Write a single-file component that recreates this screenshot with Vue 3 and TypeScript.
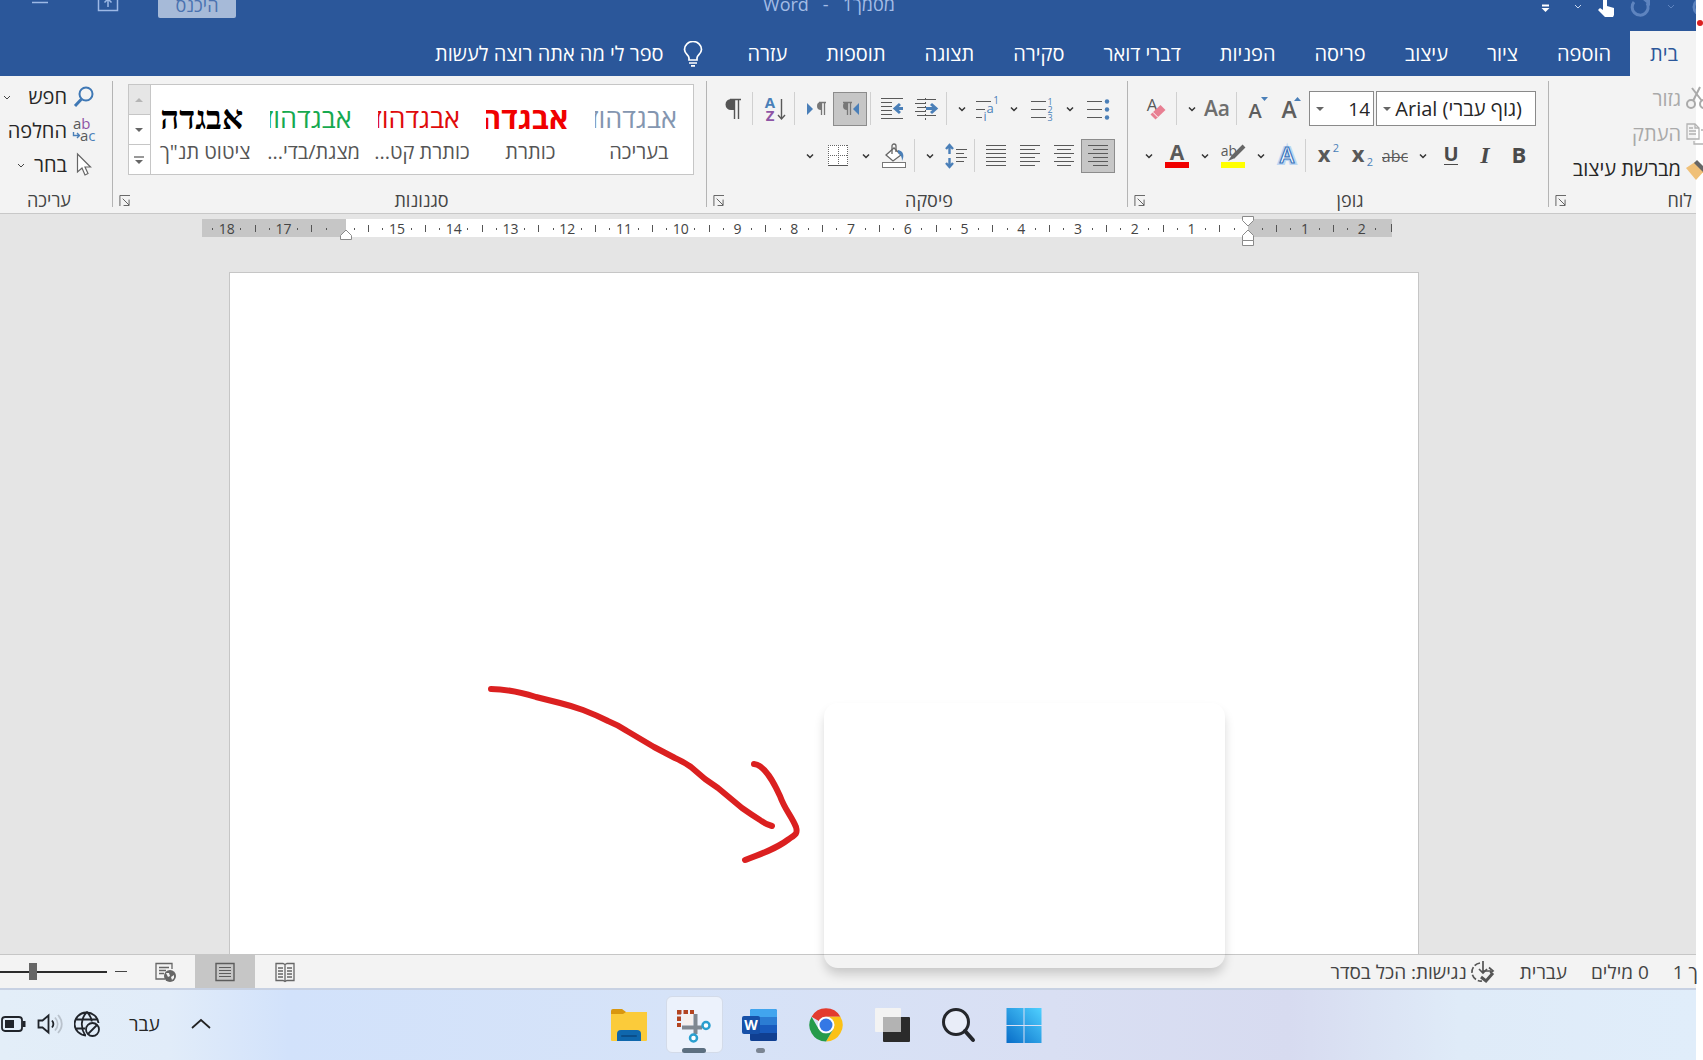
<script setup lang="ts">
import { ref } from 'vue'

interface Tool {
  kind: 'btn' | 'slim' | 'drop' | 'sep'
  icon?: string
  label?: string
  on?: boolean
}

const G = '#595959'
const B = '#4a7fb8'
const lines = (rows: [number, number, number][], color = G) =>
  rows.map(([a, b, y]) => `<path d="M${a} ${y}.5H${b}" stroke="${color}" stroke-width="1"/>`).join('')

const art: Record<string, string> = {
  chevron: `<path d="M9 10.5l3 3 3-3" fill="none" stroke="#333" stroke-width="1.5"/>`,
  bold: `<text x="12" y="19" font-size="22" font-weight="700" text-anchor="middle" fill="#4a4a4a">B</text>`,
  italic: `<text x="12" y="19" font-size="24" font-weight="700" font-style="italic" font-family="Liberation Serif, serif" text-anchor="middle" fill="#4a4a4a">I</text>`,
  underline: `<text x="12" y="17" font-size="20" font-weight="700" text-anchor="middle" fill="#4a4a4a">U</text><path d="M5 20.5h14" stroke="#4a4a4a"/>`,
  strike: `<text x="12" y="18" font-size="16" text-anchor="middle" fill="${G}">abc</text><path d="M-1 13.500h26" stroke="${G}"/>`,
  sub: `<text x="9" y="18" font-size="22" font-weight="700" text-anchor="middle" fill="${G}">x</text><text x="21" y="22" font-size="11" text-anchor="middle" fill="${B}">2</text>`,
  sup: `<text x="9" y="18" font-size="22" font-weight="700" text-anchor="middle" fill="${G}">x</text><text x="21" y="8" font-size="11" text-anchor="middle" fill="${B}">2</text>`,
  effect: `<text x="12" y="19" font-size="22" font-weight="700" text-anchor="middle" fill="#fff" stroke="#bcd6f2" stroke-width="4">A</text><text x="12" y="19" font-size="22" font-weight="600" text-anchor="middle" fill="#fff" stroke="#3f77bd" stroke-width="1.2">A</text>`,
  highlight: `<text x="8" y="12" font-size="14" text-anchor="middle" fill="${G}">ab</text><path d="M23 2L12 13" stroke="#666" stroke-width="4"/><path d="M11 11l3 3-7 3z" fill="#666"/><rect x="0" y="18" width="24" height="6" fill="#ff0"/>`,
  color: `<text x="12" y="16" font-size="21" font-weight="700" text-anchor="middle" fill="#5a5a5a">A</text><rect x="0" y="18" width="24" height="6" fill="#f00000"/>`,
  grow: `<text x="9" y="21" font-size="23" font-weight="600" text-anchor="middle" fill="#5e5e5e">A</text><path d="M14 4l3.500-4 3.500 4z" fill="${B}"/>`,
  shrink: `<text x="9" y="21" font-size="20" font-weight="600" text-anchor="middle" fill="#5e5e5e">A</text><path d="M15 0h7l-3.500 4z" fill="${B}"/>`,
  case: `<text x="11" y="19" font-size="21" font-weight="600" text-anchor="middle" fill="#6e6e6e">Aa</text>`,
  clear: `<text x="8" y="14" font-size="17" text-anchor="middle" fill="${G}">A</text><path d="M6.500 17.500l10-9.500 5 5-10 9.500z" fill="#e87f92"/><path d="M8.800 15.200l5 5" stroke="#fff" stroke-width="1"/>`,
  bullets: lines([[1, 16, 4], [1, 16, 12], [1, 16, 20]]) + [4, 12, 20].map((y) => `<circle cx="21" cy="${y + 0.5}" r="2.200" fill="${B}"/>`).join(''),
  numbers: lines([[1, 16, 4], [1, 16, 12], [1, 16, 20]]) + [1, 2, 3].map((n) => `<text x="20" y="${n * 8}" font-size="9" text-anchor="middle" fill="${B}">${n}</text>`).join(''),
  multi: lines([[0, 15, 4], [0, 9, 12], [0, 6, 20]]) + `<text x="20" y="7" font-size="10" text-anchor="middle" fill="${B}">1</text><text x="14" y="16" font-size="13" text-anchor="middle" fill="${B}">a</text><text x="9" y="24" font-size="12" text-anchor="middle" fill="${B}">i</text>`,
  indent: lines([[3, 22, 2], [1, 11, 6], [3, 11, 10], [1, 11, 14]]) + `<path d="M11.500 1v22" stroke="${G}" stroke-dasharray="2 2"/><path d="M3 18.500h19" stroke="${G}"/><path d="M12 11.500h9M17 7l5 4.500-5 4.500" fill="none" stroke="${B}" stroke-width="3"/>`,
  outdent: lines([[1, 23, 1], [1, 12, 5], [1, 12, 9], [1, 12, 13], [1, 12, 17], [1, 23, 21]]) + `<path d="M15 11.500h8M20 7l-5 4.500 5 4.500" fill="none" stroke="${B}" stroke-width="3"/>`,
  rtl: `<path d="M8 5.500h4M9.500 5v13M12.500 5v13M5 5.500h9" stroke="#777" stroke-width="1.300"/><path d="M9 5a4 4 0 0 0 0 8z" fill="#777"/><path d="M21 6v12l-6-6z" fill="${B}"/>`,
  ltr: `<path d="M3 6v12l6-6z" fill="${B}"/><path d="M15 5.500h7M17.500 5v13M20.500 5v13" stroke="#777" stroke-width="1.300"/><path d="M17 5a4 4 0 0 0 0 8z" fill="#777"/>`,
  sort: `<text x="8" y="11" font-size="15" font-weight="700" text-anchor="middle" fill="${B}">A</text><text x="8" y="24" font-size="15" font-weight="700" text-anchor="middle" fill="#8e55a5">Z</text><path d="M19.500 2v20M16 18l3.500 4 3.500-4" fill="none" stroke="${G}" stroke-width="1.400"/>`,
  pilcrow: `<path d="M10 2.500h11M14.500 2v20M18.500 2v20" stroke="#555" stroke-width="1.400"/><path d="M14 2H11a5.500 5.500 0 0 0 0 11h3z" fill="#555"/>`,
  center: lines([[2, 22, 1], [5, 19, 5], [2, 22, 9], [5, 19, 13], [2, 22, 17], [5, 19, 21]]),
  right: lines([[2, 22, 1], [7, 22, 5], [2, 22, 9], [7, 22, 13], [2, 22, 17], [7, 22, 21]]),
  left: lines([[2, 22, 1], [2, 17, 5], [2, 22, 9], [2, 17, 13], [2, 22, 17], [2, 17, 21]]),
  justify: lines([[2, 22, 1], [2, 22, 5], [2, 22, 9], [2, 22, 13], [2, 22, 17], [2, 22, 21]]),
  spacing: lines([[12, 23, 5], [12, 20, 9], [12, 23, 13], [12, 20, 17]]) + `<path d="M5.500 2v8M5.500 14v8M2 5l3.500-4L9 5M2 19l3.500 4L9 19" fill="none" stroke="${B}" stroke-width="2.400"/>`,
  bucket: `<rect x=".5" y="18.500" width="23" height="5" fill="#fff" stroke="#777"/><path d="M4 11l8-7 7 7-8 6z" fill="#fff" stroke="#666" stroke-width="1.300"/><path d="M10 10V2a2 2 0 0 1 4 0v6" fill="none" stroke="#666" stroke-width="1.300"/><path d="M16 6c5 1 7 5 4 11 0-4-1-6-4-8z" fill="${B}"/>`,
  borders: `<rect x="2" y="1" width="20" height="20" fill="#fff"/><path d="M2 1.500h20M2 11.500h20M2.500 1v20M12.500 1v20M21.500 1v20" stroke="#666" stroke-dasharray="1 1"/><path d="M2 21.500h20" stroke="#555"/>`,
}

const fontTop: Tool[] = [
  { kind: 'btn', icon: 'grow', label: 'הגדל גופן' },
  { kind: 'btn', icon: 'shrink', label: 'הקטן גופן' },
  { kind: 'sep' },
  { kind: 'slim', icon: 'case', label: 'שינוי רישיות' },
  { kind: 'drop' },
  { kind: 'sep' },
  { kind: 'btn', icon: 'clear', label: 'נקה עיצוב' },
]
const fontBottom: Tool[] = [
  { kind: 'btn', icon: 'bold', label: 'מודגש' },
  { kind: 'btn', icon: 'italic', label: 'נטוי' },
  { kind: 'btn', icon: 'underline', label: 'קו תחתון' },
  { kind: 'drop' },
  { kind: 'btn', icon: 'strike', label: 'קו חוצה' },
  { kind: 'btn', icon: 'sub', label: 'כתב תחתי' },
  { kind: 'btn', icon: 'sup', label: 'כתב עילי' },
  { kind: 'sep' },
  { kind: 'slim', icon: 'effect', label: 'אפקטי טקסט' },
  { kind: 'drop' },
  { kind: 'btn', icon: 'highlight', label: 'צבע סימון' },
  { kind: 'drop' },
  { kind: 'btn', icon: 'color', label: 'צבע גופן' },
  { kind: 'drop' },
]
const paraTop: Tool[] = [
  { kind: 'btn', icon: 'bullets', label: 'תבליטים' },
  { kind: 'drop' },
  { kind: 'btn', icon: 'numbers', label: 'מספור' },
  { kind: 'drop' },
  { kind: 'slim', icon: 'multi', label: 'רשימה מרובת רמות' },
  { kind: 'drop' },
  { kind: 'sep' },
  { kind: 'btn', icon: 'indent', label: 'הקטן כניסה' },
  { kind: 'btn', icon: 'outdent', label: 'הגדל כניסה' },
  { kind: 'sep' },
  { kind: 'btn', icon: 'rtl', label: 'מימין לשמאל', on: true },
  { kind: 'btn', icon: 'ltr', label: 'משמאל לימין' },
  { kind: 'sep' },
  { kind: 'btn', icon: 'sort', label: 'מיון' },
  { kind: 'sep' },
  { kind: 'btn', icon: 'pilcrow', label: 'הצג הכל' },
]
const paraBottom: Tool[] = [
  { kind: 'btn', icon: 'right', label: 'יישור לימין', on: true },
  { kind: 'btn', icon: 'center', label: 'מרכוז' },
  { kind: 'btn', icon: 'left', label: 'יישור לשמאל' },
  { kind: 'btn', icon: 'justify', label: 'יישור לשני הצדדים' },
  { kind: 'sep' },
  { kind: 'slim', icon: 'spacing', label: 'מרווח בין שורות' },
  { kind: 'drop' },
  { kind: 'sep' },
  { kind: 'btn', icon: 'bucket', label: 'הצללה' },
  { kind: 'drop' },
  { kind: 'btn', icon: 'borders', label: 'גבולות' },
  { kind: 'drop' },
]

const tabs = ['בית', 'הוספה', 'ציור', 'עיצוב', 'פריסה', 'הפניות', 'דברי דואר', 'סקירה', 'תצוגה', 'תוספות', 'עזרה']
const active = ref('בית')

const styleCards = [
  { sample: 'אבגדהוז', name: 'בעריכה', look: 'slate' },
  { sample: 'אבגדה', name: 'כותרת', look: 'heading' },
  { sample: 'אבגדהוז', name: 'כותרת קט...', look: 'red' },
  { sample: 'אבגדהוז', name: 'מצגת/בדי...', look: 'green' },
  { sample: 'אבגדה', name: 'ציטוט תנ"ך', look: 'quote' },
]

// Quarter-centimetre marks, from 2.25 cm right of the origin to 18.25 cm left of it.
const marks = Array.from({ length: 83 }, (_, i) => {
  const q = 9 - i
  const cm = Math.abs(q) / 4
  if (q === 0 || cm === 16) return ''
  if (q % 4 === 0) return String(cm)
  return q % 2 === 0 ? 'half' : 'dot'
})

const zoomLevel = ref(29)
</script>

<template>
  <div class="shell" dir="rtl">
    <main class="window">
      <header class="titlebar">
        <div class="quick">
          <button class="bare" aria-label="בצע שוב"><svg class="ic" viewBox="0 0 24 24"><circle cx="12" cy="9" r="8" fill="none" stroke="#5e84bf" stroke-width="3" /></svg></button>
          <button class="bare" aria-label="אפשרויות"><svg class="ic" viewBox="0 0 24 24"><path d="M9 7l3 3 3-3" fill="none" stroke="#5e84bf" /></svg></button>
          <button class="bare" aria-label="בטל"><svg class="ic" viewBox="0 0 24 24"><path d="M6 4a8 8 0 1 0 13 1" fill="none" stroke="#5e84bf" stroke-width="3" /><path d="M14 1h8v7z" fill="#5e84bf" /></svg></button>
          <button class="bare" aria-label="מצב מגע"><svg class="ic" viewBox="0 0 24 24"><path d="M6 0h4v8l7 2v7l-1 2H8L1 12l2-2 3 2z" fill="#fff" /></svg></button>
          <button class="bare" aria-label="בחירת מצב"><svg class="ic" viewBox="0 0 24 24"><path d="M9 7l3 3 3-3" fill="none" stroke="#c9d7ee" /></svg></button>
          <button class="bare" aria-label="התאמה אישית"><svg class="ic" viewBox="0 0 24 24"><path d="M7 7.500h7" stroke="#fff" stroke-width="2" /><path d="M6.500 10h8l-4 4z" fill="#fff" /></svg></button>
        </div>
        <h1 class="doc-title"><span>מסמך1</span><span>-</span><span>Word</span></h1>
        <div class="win-controls">
          <button class="signin">היכנס</button>
          <button class="bare" aria-label="אפשרויות תצוגה"><svg class="ic" viewBox="0 0 24 24"><path d="M2.500 0v15.500h19V0" fill="none" stroke="#9db9e6" stroke-width="1.500" /><path d="M12 12V4M8.500 7.500L12 4l3.500 3.500" fill="none" stroke="#9db9e6" stroke-width="1.500" /></svg></button>
          <button class="bare minimize" aria-label="מזער"><svg class="ic" viewBox="0 0 24 24"><path d="M4 7.500h16" stroke="#9db9e6" stroke-width="1.500" /></svg></button>
        </div>
      </header>

      <nav class="tabs">
        <button v-for="t in tabs" :key="t" class="tab" :class="{ current: t === active }" @click="active = t">{{ t }}</button>
        <button class="tell">
          <svg class="bulb" viewBox="0 0 20 26"><path d="M6 19v-2c0-3-4.500-4-4.500-8.500a8.500 8 0 0 1 17 0C18.500 13 14 14 14 17v2z" fill="none" stroke="#fff" stroke-width="1.700" /><path d="M6 22h8M8 24.800h4" stroke="#fff" stroke-width="1.700" /></svg>
          <span>ספר לי מה אתה רוצה לעשות</span>
        </button>
      </nav>

      <section class="ribbon">
        <div class="group clipboard">
          <div class="stack">
            <button class="cmd off"><svg class="ic" viewBox="0 0 24 24"><g fill="none" stroke="#aaa" stroke-width="2"><circle cx="5" cy="17" r="4" /><circle cx="18" cy="17" r="4" /><path d="M7 14L14 0M16 14L6 1" /></g></svg>גזור</button>
            <button class="cmd off"><svg class="ic" viewBox="0 0 24 24"><g fill="none" stroke="#b3b3b3" stroke-width="1.300"><path d="M1 2h8l4 4v11H1z" /><path d="M3 6h4M3 9h7M3 12h7M9 2v4h4M15 8h7v14H8v-3" /></g></svg>העתק</button>
            <button class="cmd"><svg class="ic" viewBox="0 0 24 24"><path d="M0 11l9-6 9 9-8 9z" fill="#f0c078" /><path d="M8 6l3-3 9 9-3 3z" fill="#666" /></svg>מברשת עיצוב</button>
          </div>
          <footer class="foot"><span class="caption">לוח</span><button class="launch" aria-label="לוח: אפשרויות"><svg viewBox="0 0 12 12"><path d="M1 12V.500h11M4 4l7 7M11 5v6.500H5" /></svg></button></footer>
        </div>
        <i class="rule"></i>

        <div class="group medium">
          <div class="rows">
            <div class="row">
              <span class="combo font"><select aria-label="גופן"><option>(גוף עברי) Arial</option></select><svg viewBox="0 0 8 4"><path d="M0 0h8L4 4z" /></svg></span>
              <span class="combo size"><select aria-label="גודל גופן"><option>14</option></select><svg viewBox="0 0 8 4"><path d="M0 0h8L4 4z" /></svg></span>
              <template v-for="(t, i) in fontTop" :key="i">
                <i v-if="t.kind === 'sep'" class="sep"></i>
                <button v-else class="tool" :class="[t.kind, { on: t.on }]" :aria-label="t.label || 'אפשרויות'"><svg class="ic" viewBox="0 0 24 24" v-html="art[t.icon || 'chevron']"></svg></button>
              </template>
            </div>
            <div class="row">
              <template v-for="(t, i) in fontBottom" :key="i">
                <i v-if="t.kind === 'sep'" class="sep"></i>
                <button v-else class="tool" :class="[t.kind, { on: t.on }]" :aria-label="t.label || 'אפשרויות'"><svg class="ic" viewBox="0 0 24 24" v-html="art[t.icon || 'chevron']"></svg></button>
              </template>
            </div>
          </div>
          <footer class="foot"><span class="caption">גופן</span><button class="launch" aria-label="גופן: אפשרויות"><svg viewBox="0 0 12 12"><path d="M1 12V.500h11M4 4l7 7M11 5v6.500H5" /></svg></button></footer>
        </div>
        <i class="rule"></i>

        <div class="group medium">
          <div class="rows">
            <div v-for="(list, r) in [paraTop, paraBottom]" :key="r" class="row">
              <template v-for="(t, i) in list" :key="i">
                <i v-if="t.kind === 'sep'" class="sep"></i>
                <button v-else class="tool" :class="[t.kind, { on: t.on }]" :aria-label="t.label || 'אפשרויות'"><svg class="ic" viewBox="0 0 24 24" v-html="art[t.icon || 'chevron']"></svg></button>
              </template>
            </div>
          </div>
          <footer class="foot"><span class="caption">פיסקה</span><button class="launch" aria-label="פיסקה: אפשרויות"><svg viewBox="0 0 12 12"><path d="M1 12V.500h11M4 4l7 7M11 5v6.500H5" /></svg></button></footer>
        </div>
        <i class="rule"></i>

        <div class="group styles">
          <div class="gallery">
            <button v-for="s in styleCards" :key="s.name" class="card">
              <span class="sample" :class="s.look">{{ s.sample }}</span>
              <span class="card-name">{{ s.name }}</span>
            </button>
            <div class="scroll">
              <button class="dim" aria-label="למעלה"><svg viewBox="0 0 8 4"><path d="M0 4h8L4 0z" fill="#b5b5b5" /></svg></button>
              <button aria-label="למטה"><svg viewBox="0 0 8 4"><path d="M0 0h8L4 4z" fill="#666" /></svg></button>
              <button aria-label="עוד"><svg class="more" viewBox="0 0 10 8"><path d="M0 1h10" stroke="#777" stroke-width="1.500" /><path d="M1 4h8L5 8z" fill="#666" /></svg></button>
            </div>
          </div>
          <footer class="foot"><span class="caption">סגנונות</span><button class="launch" aria-label="סגנונות: אפשרויות"><svg viewBox="0 0 12 12"><path d="M1 12V.500h11M4 4l7 7M11 5v6.500H5" /></svg></button></footer>
        </div>
        <i class="rule"></i>

        <div class="group editing">
          <div class="stack">
            <button class="cmd"><svg class="ic" viewBox="0 0 24 24"><circle cx="14" cy="9" r="6.500" fill="none" stroke="#3f78b5" stroke-width="2" /><path d="M9.500 14L3 21" stroke="#3f78b5" stroke-width="3" /></svg>חפש<svg class="chev far" viewBox="0 0 8 5"><path d="M1 1l3 3 3-3" /></svg></button>
            <button class="cmd"><svg class="ic" viewBox="0 0 24 24"><text x="1" y="10" font-size="15" fill="#595959">a<tspan fill="#8e55a5">b</tspan></text><text x="8" y="22" font-size="15" fill="#595959">a<tspan fill="#4a7fb8">c</tspan></text><path d="M1.500 13v3.500H7M5 14l2.500 2.500L5 19" fill="none" stroke="#4a7fb8" stroke-width="1.400" /></svg>החלפה</button>
            <button class="cmd"><svg class="ic" viewBox="0 0 24 24"><path d="M5.500 1v18l4.500-4 3 7 3-1.500-3-6.500h5.500z" fill="#fff" stroke="#666" stroke-width="1.200" /></svg>בחר<svg class="chev" viewBox="0 0 8 5"><path d="M1 1l3 3 3-3" /></svg></button>
          </div>
          <footer class="foot"><span class="caption">עריכה</span></footer>
        </div>
      </section>

      <section class="workspace">
        <div class="ruler">
          <span v-for="(m, i) in marks" :key="i" class="mark"><i v-if="m === 'half' || m === 'dot'" :class="m"></i><template v-else>{{ m }}</template></span>
          <svg class="stop start" viewBox="0 0 12 32"><g fill="#fff" stroke="#8a8a8a"><path d="M.500 1.500h11v4L6 11 .500 5.500z" /><path d="M.500 25.500v-5L6 15l5.500 5.500v5z" /><path d="M.500 25.500h11v5H.500z" /></g></svg>
          <svg class="stop end" viewBox="0 0 12 32"><path d="M.500 24.500v-4L6 15l5.500 5.500v4z" fill="#fff" stroke="#8a8a8a" /></svg>
        </div>
        <article class="paper" contenteditable="true" aria-label="מסמך"></article>
      </section>

      <footer class="status">
        <button class="st page-no">ך 1</button>
        <button class="st">0 מילים</button>
        <button class="st">עברית</button>
        <button class="st access"><svg class="ic" viewBox="0 0 24 24"><g fill="none" stroke="#555" stroke-width="1.700"><path d="M8 3a9 9 0 0 0 2 18" stroke-dasharray="6 2" /><path d="M11 1v11M7 9l4 4 4-4" /><path d="M11 11h8M17 7.500l4 3.500-3 2" /><path d="M9 17l5 4 7-8" stroke-width="3" /></g></svg>נגישות: הכל בסדר</button>
        <span class="grow"></span>
        <button class="view" aria-label="מצב קריאה"><svg class="ic" viewBox="0 0 24 24"><g fill="none" stroke="#666" stroke-width="1.300"><path d="M3 3.500h7l2 1 2-1h7v17h-7l-2 1-2-1H3zM12 4v18" /><path d="M5 8h5M5 11h5M5 14h5M5 17h5M14 8h5M14 11h5M14 14h5M14 17h5" /></g></svg></button>
        <button class="view on" aria-label="פריסת הדפסה"><svg class="ic" viewBox="0 0 24 24"><g fill="none" stroke="#5c5c5c"><path d="M3 3.500h18v17H3z" stroke-width="1.400" /><path d="M6 7.500h12M6 10.500h12M6 13.500h12M6 16.500h12" /></g></svg></button>
        <button class="view" aria-label="פריסת אינטרנט"><svg class="ic" viewBox="0 0 24 24"><g fill="none" stroke="#666" stroke-width="1.300"><path d="M12 19H3V3.500h16V9" /><path d="M6 7.500h10M6 10.500h7M6 13.500h5" /></g><circle cx="17" cy="16" r="6" fill="#666" /><path d="M13 13l3 0 1 3-2 1zM18 17l3-2v3l-2 2z" fill="#f3f3f3" /></svg></button>
        <button class="minus" aria-label="הקטן תצוגה"></button>
        <input v-model="zoomLevel" class="zoom" type="range" min="0" max="100" dir="ltr" aria-label="מרחק מתצוגה" />
      </footer>
    </main>

    <footer class="taskbar">
      <div class="apps">
        <button class="app" aria-label="התחל"><svg viewBox="0 0 40 40"><defs><linearGradient id="win" gradientUnits="userSpaceOnUse" x1="37" y1="3" x2="3" y2="37"><stop offset="0" stop-color="#4fd0ff" /><stop offset="1" stop-color="#0a6fc9" /></linearGradient></defs><path d="M2.500 3h17v17h-17zM20.500 3h17v17h-17zM2.500 21h17v17h-17zM20.500 21h17v17h-17z" fill="url(#win)" /></svg></button>
        <button class="app" aria-label="חיפוש"><svg viewBox="0 0 40 40"><circle cx="18" cy="17" r="12.500" fill="#e9edf8" stroke="#24262b" stroke-width="3" /><path d="M27 26l8 9" stroke="#24262b" stroke-width="4" stroke-linecap="round" /></svg></button>
        <button class="app" aria-label="תצוגת משימות"><svg viewBox="0 0 40 40"><rect x="11" y="12" width="27" height="25" rx="1" fill="#2b2b2b" /><rect x="3" y="3" width="26" height="24" rx="1" fill="#f3f3f3" /><rect x="11" y="12" width="18" height="15" fill="#b3b3b3" /></svg></button>
        <button class="app" aria-label="Chrome"><svg viewBox="0 0 40 40"><path d="M5.600 11.700A16.600 16.600 0 0 1 34.400 11.700H20a8.300 8.300 0 0 0-7.200 4.200z" fill="#e33b2e" /><path d="M34.400 11.700A16.600 16.600 0 0 1 20 36.600l7.200-12.450A8.300 8.300 0 0 0 20 11.700z" fill="#fbc116" /><path d="M20 36.600A16.600 16.600 0 0 1 5.600 11.700l7.200 12.450A8.300 8.300 0 0 0 27.200 24.150z" fill="#259b4b" /><circle cx="20" cy="20" r="8.300" fill="#fff" /><circle cx="20" cy="20" r="6.500" fill="#3478e5" /></svg></button>
        <button class="app open" aria-label="Word"><svg viewBox="0 0 40 40"><rect x="10" y="4" width="27" height="32" rx="2" fill="#2b7cd3" /><path d="M12 4h23a2 2 0 0 1 2 2v6H10V6a2 2 0 0 1 2-2z" fill="#41a5ee" /><path d="M10 20h27v8H10z" fill="#185abd" /><path d="M10 28h27v6a2 2 0 0 1-2 2H12a2 2 0 0 1-2-2z" fill="#103f91" /><rect x="2" y="11" width="18" height="18" rx="2" fill="#1650a8" /><text x="11" y="25" font-size="14" font-weight="700" text-anchor="middle" fill="#fff">W</text></svg></button>
        <button class="app focus" aria-label="כלי החיתוך"><svg viewBox="0 0 40 40"><path d="M9 9h10v11H9z" fill="#f5f0ee" /><path d="M3 7h17M5 5v17" fill="none" stroke="#b34420" stroke-width="4" stroke-dasharray="4.500 2" /><path d="M21.500 9v20M8 22.500h20" stroke="#808890" stroke-width="4" /><circle cx="32" cy="20.500" r="3.500" fill="#fff" stroke="#2a9fcf" stroke-width="2.500" /><circle cx="19.500" cy="33" r="3.500" fill="#fff" stroke="#2a9fcf" stroke-width="2.500" /></svg></button>
        <button class="app" aria-label="סייר הקבצים"><svg viewBox="0 0 40 40"><path d="M2 6a2 2 0 0 1 2-2h9l4 3v8H2z" fill="#d9970f" /><path d="M2 9h12l3-2h21v28a1 1 0 0 1-1 1H3a1 1 0 0 1-1-1z" fill="#fbcb3a" /><path d="M8 36v-7a4 4 0 0 1 4-4h16a4 4 0 0 1 4 4v7z" fill="#0f67ad" /><path d="M13 31h14" stroke="#0a4e8a" stroke-width="2" stroke-linecap="round" /></svg></button>
      </div>
      <div class="tray">
        <button class="bare" aria-label="הצג סמלים"><svg class="up" viewBox="0 0 24 24"><path d="M3 16l9-8 9 8" fill="none" stroke="#222" stroke-width="1.700" /></svg></button>
        <button class="lang">עבר</button>
        <button class="bare" aria-label="אין חיבור"><svg class="tr" viewBox="0 0 26 26"><g fill="none" stroke="#20242a" stroke-width="1.800"><path d="M12 24.500A12 11.500 0 1 1 24.500 12M2 8.500h21M2 17.500h9M11 24C6.500 17 6.500 7 13 1c3 3 4.500 6.500 4.700 9.500" /><circle cx="18.500" cy="18.500" r="6.500" /><path d="M14 23l9-9" /></g></svg></button>
        <button class="bare" aria-label="עוצמת קול"><svg class="tr" viewBox="0 0 26 26"><g fill="none" stroke="#20242a" stroke-width="1.800"><path d="M1.500 9.500v7h4l6 5v-17l-6 5z" /><path d="M15 9.500c1.600 2 1.600 5 0 7" /><path d="M18 6.500c3.500 4 3.500 9 0 13M21 4c5 5.500 5 12.500 0 18" stroke="#b9c2cc" /></g></svg></button>
        <button class="bare" aria-label="סוללה"><svg class="tr" viewBox="0 0 26 26"><rect x="2" y="6" width="20" height="14" rx="3" fill="none" stroke="#20242a" stroke-width="1.800" /><rect x="5" y="9" width="9" height="8" fill="#20242a" /><path d="M24 10v6" stroke="#20242a" stroke-width="3" /></svg></button>
      </div>
    </footer>

    <div class="snip-card"></div>
    <svg class="ink" viewBox="0 0 320 184"><g fill="none" stroke="#db2020" stroke-width="6" stroke-linecap="round" stroke-linejoin="round"><path d="M7 5Q26 5 52 13L76 19Q88 22 99 26Q112 31 124 37Q134 41 143 47L170 63L191 74Q200 78 207 83L221 95L234 104L258 124Q268 131 276 136Q281 140 288 142" /><path d="M270 80C281 81 290 99 296 112C301 126 307 131 312 143C314 150 311 151 305 155C292 165 275 171 261 176" /></g></svg>
    <span class="ink-dot"></span>
  </div>
</template>

<style>
body { margin: 0; background: #fff; }
</style>

<style scoped>
.shell {
  position: relative;
  display: flex;
  flex-direction: column;
  box-sizing: border-box;
  min-height: 100vh;
  padding-right: 7px;
  overflow: hidden;
  font-family: "Open Sans", "Noto Sans", "DejaVu Sans", sans-serif;
  font-size: 20px;
  color: #262626;
}
.shell * { box-sizing: border-box; }
button { padding: 0; border: 0; background: none; font: inherit; color: inherit; white-space: nowrap; }
.ic { width: 24px; height: 24px; flex: none; direction: ltr; display: block; overflow: visible; }
.window { flex: 1; display: flex; flex-direction: column; }

.titlebar { display: flex; height: 31px; overflow: hidden; background: #2b579a; color: #a3bce6; justify-content: space-between; align-items: flex-start; }
.quick { display: flex; gap: 7px; width: 636px; margin-right: -18px; height: 24px; }
.quick .ic { margin-top: -4px; }
.doc-title { display: flex; gap: 14px; margin: -8px 0 0; font-size: 18px; line-height: 24px; font-weight: 400; }
.win-controls { display: flex; width: 580px; justify-content: flex-end; gap: 38px; padding-left: 28px; align-items: flex-start; }
.win-controls .ic { margin-top: -5px; }
.minimize { margin-right: 6px; }
.signin { height: 26px; width: 78px; margin: -8px 0 0; border-radius: 2px; background: #a6bad8; color: #4a72b0; font-size: 18px; line-height: 24px; }

.tabs { display: flex; height: 45px; background: #2b579a; color: #fff; }
.tab { padding: 0 19px 0 20px; }
.tab.current { padding-right: 18px; background: #f3f3f3; color: #2b579a; }
.tell { display: flex; align-items: center; gap: 19px; margin-right: 25px; }
.bulb { width: 20px; height: 26px; }

.ribbon { display: flex; height: 138px; background: #f3f3f3; border-bottom: 1px solid #c8c8c8; }
.group { display: flex; flex-direction: column; justify-content: space-between; flex: none; }
.medium { width: 420px; }
.clipboard { width: 147px; }
.styles { flex: 1; }
.editing { width: 112px; }
.rule { flex: none; width: 1px; height: 126px; margin-top: 5px; background: #b4b4b4; }
.rows { display: flex; flex-direction: column; gap: 12px; padding: 15px 12px 0 0; }
.row { display: flex; height: 35px; align-items: center; }
.tool { display: flex; flex: none; align-items: center; justify-content: center; width: 34px; height: 34px; border: 1px solid transparent; }
.tool.slim { width: 30px; }
.tool.drop { width: 22px; }
.tool.on { background: #c6c6c6; border-color: #8c8c8c; }
.sep { flex: none; width: 1px; height: 33px; margin: 0 4px 0 3px; background: #d0d0d0; }
.combo { position: relative; display: flex; height: 35px; }
.combo.font { width: 160px; margin-left: 2px; }
.combo.size { width: 65px; }
.combo select { width: 100%; height: 35px; appearance: none; border: 1px solid #8a8a8a; border-radius: 0; background: #fff; font: inherit; color: #262626; padding: 0 13px 0 0; }
.combo.size select { padding-right: 3px; font-size: 19px; }
.combo svg { position: absolute; left: 7px; top: 16px; width: 8px; height: 4px; fill: #666; pointer-events: none; }
.foot { display: flex; align-items: center; height: 26px; }
.caption { flex: 1; text-align: center; font-size: 18px; line-height: 24px; color: #444; }
.clipboard .caption { text-align: right; padding-right: 4px; }
.editing .caption { padding-right: 14px; }
.launch { width: 24px; height: 24px; display: flex; justify-content: flex-end; align-items: center; padding-left: 6px; }
.launch svg { width: 11px; height: 11px; fill: none; stroke: #555; direction: ltr; }
.stack { display: flex; flex-direction: column; gap: 10px; padding-top: 9px; }
.editing .stack { padding-right: 16px; }
.clipboard .stack { padding-top: 11px; gap: 11px; }
.cmd { display: flex; align-items: center; gap: 5px; height: 24px; line-height: 24px; }
.cmd.off { color: #a9a9a9; }
.clipboard .cmd { margin-right: -14px; }
.chev { width: 8px; height: 5px; fill: none; stroke: #444; margin-right: 4px; }
.chev.far { margin-right: 12px; }

.gallery { display: flex; height: 91px; margin: 8px 12px 0 15px; border: 1px solid #c6c6c6; background: #fff; }
.card { flex: 1; display: flex; flex-direction: column; align-items: center; padding-top: 12px; min-width: 0; }
.sample { width: 82px; height: 43px; margin-right: 6px; overflow: hidden; text-align: right; font-size: 27px; line-height: 42px; }
.slate { color: #8496b0; }
.heading { color: #f00000; font-weight: 700; font-size: 30px; }
.red { color: #e00b0b; }
.green { color: #16a950; }
.quote { color: #000; font-family: "Liberation Serif", serif; font-weight: 700; font-size: 33px; }
.card-name { line-height: 24px; color: #555; }
.scroll { display: flex; flex-direction: column; width: 22px; border-right: 1px solid #c6c6c6; }
.scroll button { flex: 1; display: flex; align-items: center; justify-content: center; }
.scroll button + button { border-top: 1px solid #c6c6c6; }
.scroll .dim { background: #e6e6e6; }
.scroll svg { width: 8px; height: 4px; }
.scroll .more { width: 10px; height: 8px; }

.workspace { flex: 1; display: flex; flex-direction: column; background: #e5e5e5; padding: 5px 277px 0 229px; }
.ruler { position: relative; display: flex; height: 18px; margin: 0 27px 0 -27px; padding: 1px 9px 0 4px; background: linear-gradient(#555, #555) 100% 50% / 1px 8px no-repeat, linear-gradient(90deg, #c6c6c6 144px, #fff 144px, #fff calc(100% - 144px), #c6c6c6 calc(100% - 144px)); font-size: 14px; line-height: 18px; color: #444; }
.mark { flex: 1 1 0; width: 0; display: flex; justify-content: center; align-items: center; }
.half { width: 1px; height: 7px; background: #555; }
.dot { width: 1px; height: 2px; background: #555; }
.stop { position: absolute; width: 12px; height: 32px; top: -4px; }
.stop.start { right: 138px; }
.stop.end { left: 138px; }
.paper { flex: 1; margin-top: 35px; background: #fff; border: 1px solid #c6c6c6; border-bottom: 0; outline: none; }

.status { display: flex; height: 34px; background: #f3f3f3; border-top: 1px solid #c6c6c6; font-size: 19px; align-items: stretch; color: #444; }
.st { margin-left: 24px; }
.page-no { margin-right: -2px; }
.access { display: flex; align-items: center; gap: 5px; margin-left: 0; }
.grow { flex: 1; }
.view { width: 60px; display: flex; align-items: center; justify-content: center; }
.view.on { background: #c6c6c6; }
.minus { width: 12px; height: 1px; margin: 16px 8px 0; background: #444; }
.zoom { appearance: none; width: 107px; height: 33px; margin: 0; background: linear-gradient(#2b2b2b, #2b2b2b) 0 50% / 100% 2px no-repeat; }
.zoom::-webkit-slider-thumb { appearance: none; width: 8px; height: 17px; background: #666; border: 0; border-radius: 0; }

.taskbar { display: grid; grid-template-columns: 639fr 462fr 595fr; height: 72px; border-top: 2px solid #c7d1e3; background: linear-gradient(90deg, #e3eef8 0, #e1ecf9 10%, #d2e2fb 17%, #d6e3f8 40%, #d9dff3 62%, #d7dbf0 76%, #dfebf8 86%, #e0edfa 100%); }
.apps { grid-column: 2; display: flex; justify-content: space-between; padding: 6px 5px 0; }
.app { position: relative; width: 57px; height: 57px; display: flex; align-items: center; justify-content: center; border-radius: 6px; border: 1px solid transparent; }
.app svg { width: 40px; height: 40px; direction: ltr; overflow: visible; }
.app.focus { background: #ecf2fc; border-color: #d3dbe9; }
.app.open::after, .app.focus::after { content: ""; position: absolute; bottom: -1px; left: calc(50% - 4px); width: 9px; height: 5px; border-radius: 3px; background: #7b8593; }
.app.focus::after { left: calc(50% - 12px); width: 24px; background: #5c6f80; }
.tray { grid-column: 3; display: flex; align-items: center; justify-content: flex-end; gap: 11px; padding-bottom: 2px; }
.tr { width: 26px; height: 26px; display: block; }
.up { width: 24px; height: 24px; display: block; margin-left: 18px; }
.lang { font-size: 19px; margin-left: 18px; }

.snip-card { position: absolute; left: 824px; top: 703px; width: 401px; height: 265px; border-radius: 14px; box-shadow: 0 7px 11px -1px rgba(0, 0, 0, 0.18); pointer-events: none; }
.ink { position: absolute; left: 484px; top: 684px; width: 320px; height: 184px; pointer-events: none; }
.ink-dot { position: absolute; right: 0; top: 20px; width: 6px; height: 6px; border-radius: 3px; background: #db2020; }
</style>
